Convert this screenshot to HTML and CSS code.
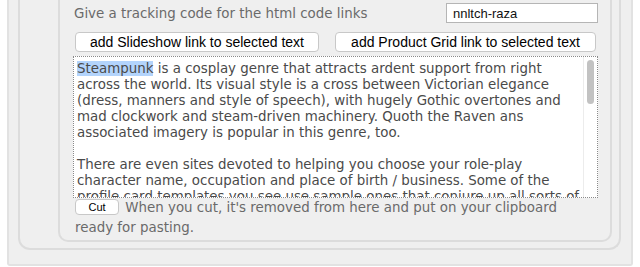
FILE: index.html
```html
<!DOCTYPE html>
<html>
<head>
<meta charset="utf-8">
<link rel="stylesheet" href="styles.css">
</head>
<body>
<div class="outer">
  <div class="middle">
    <div class="inner">
      <div class="track-row">
        <span class="label">Give a tracking code for the html code links</span>
        <input class="track-input" type="text" value="nnltch-raza">
      </div>
      <div class="btn-row">
        <button class="btn btn-slide">add Slideshow link to selected text</button>
        <button class="btn btn-grid">add Product Grid link to selected text</button>
      </div>
      <div class="editor">
        <div class="editor-text">
          <p><span class="sel">Steampunk</span> is a cosplay genre that attracts ardent support from right across the world. Its visual style is a cross between Victorian elegance (dress, manners and style of speech), with hugely Gothic overtones and mad clockwork and steam-driven machinery. Quoth the Raven ans associated imagery is popular in this genre, too.</p>
          <p>There are even sites devoted to helping you choose your role-play character name, occupation and place of birth / business. Some of the profile card templates you see use sample ones that conjure up all sorts of</p>
        </div>
        <div class="scroll-track"><div class="scroll-thumb"></div></div>
      </div>
      <p class="cut-row"><button class="btn btn-cut">Cut</button> When you cut, it's removed from here and put on your clipboard ready for pasting.</p>
    </div>
  </div>
</div>
</body>
</html>
```
FILE: styles.css
```css
html, body {
  margin: 0;
  padding: 0;
  background: #ffffff;
}
body {
  width: 640px;
  height: 267px;
  overflow: hidden;
  font-family: "DejaVu Sans", Verdana, sans-serif;
}
.outer {
  margin-left: 7px;
  width: 626px;
  box-sizing: border-box;
  background: #efefef;
  border: 2px solid #e2e2e2;
  border-top: none;
  border-radius: 0 0 3px 3px;
  padding: 0 10px 14px 9px;
}
.middle {
  border: 2px solid #dcdcdc;
  border-top: none;
  border-radius: 0 0 12px 12px;
  padding: 0 7px 6px 38px;
}
.inner {
  border: 2px solid #dcdcdc;
  border-top: none;
  border-radius: 0 0 10px 10px;
  padding: 3px 12px 0 13px;
}
.track-row {
  display: flex;
  align-items: center;
  height: 20px;
}
.label {
  font-size: 13.4px;
  color: #6a6a6a;
  padding-left: 1px;
}
.track-input {
  margin-left: auto;
  width: 152px;
  height: 20px;
  box-sizing: border-box;
  border: 1px solid #b5b5b5;
  background: #fff;
  font-family: "Liberation Sans", Arial, sans-serif;
  font-size: 13px;
  color: #111;
  padding: 0 0 0 6px;
  margin-right: 0;
}
.btn-row {
  display: flex;
  justify-content: space-between;
  margin-top: 9px;
  padding: 0 2px 0 2px;
}
.btn {
  background: #fff;
  border: 1px solid #c8c8c8;
  border-radius: 4px;
  font-family: "Liberation Sans", Arial, sans-serif;
  color: #000;
  padding: 0;
  box-sizing: border-box;
}
.btn-slide {
  width: 244px;
  height: 20px;
  font-size: 14px;
}
.btn-grid {
  width: 261px;
  height: 20px;
  font-size: 14px;
}
.editor {
  display: flex;
  margin-top: 4px;
  height: 142px;
  box-sizing: border-box;
  border: 1px dotted #8a8a8a;
  background: #fff;
}
.editor-text {
  flex: 1;
  overflow: hidden;
  padding: 4px 2px 0 3px;
  font-size: 13.4px;
  line-height: 16px;
  color: #4a4a4a;
}
.editor-text p {
  margin: 0 0 16px 0;
}
.sel {
  background: #b3d4fc;
}
.scroll-track {
  width: 14px;
  flex: none;
  border-left: 1px solid #ececec;
  padding: 3px 3px 0 3px;
  box-sizing: border-box;
}
.scroll-thumb {
  height: 44px;
  background: #c2c2c2;
  border-radius: 4px;
}
.cut-row {
  margin: 0;
  padding: 0 0 2px 2px;
  font-size: 13.4px;
  line-height: 20px;
  color: #6a6a6a;
}
.btn-cut {
  width: 44px;
  height: 16px;
  font-size: 11px;
  vertical-align: 1px;
  margin-right: 2px;
}
```
